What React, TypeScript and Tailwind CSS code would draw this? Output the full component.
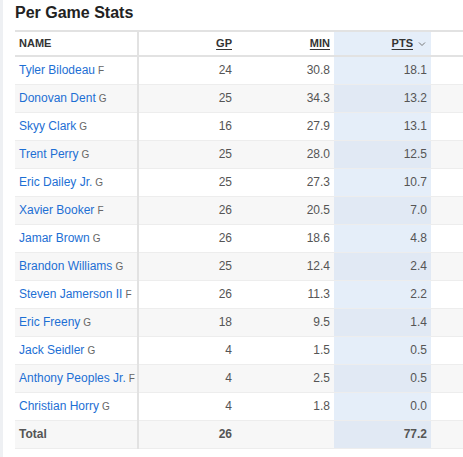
import React from "react";

type Player = { name: string; pos: string; gp: number; min: string; pts: string };

const players: Player[] = [
    { name: "Tyler Bilodeau", pos: "F", gp: 24, min: "30.8", pts: "18.1" },
    { name: "Donovan Dent", pos: "G", gp: 25, min: "34.3", pts: "13.2" },
    { name: "Skyy Clark", pos: "G", gp: 16, min: "27.9", pts: "13.1" },
    { name: "Trent Perry", pos: "G", gp: 25, min: "28.0", pts: "12.5" },
    { name: "Eric Dailey Jr.", pos: "G", gp: 25, min: "27.3", pts: "10.7" },
    { name: "Xavier Booker", pos: "F", gp: 26, min: "20.5", pts: "7.0" },
    { name: "Jamar Brown", pos: "G", gp: 26, min: "18.6", pts: "4.8" },
    { name: "Brandon Williams", pos: "G", gp: 25, min: "12.4", pts: "2.4" },
    { name: "Steven Jamerson II", pos: "F", gp: 26, min: "11.3", pts: "2.2" },
    { name: "Eric Freeny", pos: "G", gp: 18, min: "9.5", pts: "1.4" },
    { name: "Jack Seidler", pos: "G", gp: 4, min: "1.5", pts: "0.5" },
    { name: "Anthony Peoples Jr.", pos: "F", gp: 4, min: "2.5", pts: "0.5" },
    { name: "Christian Horry", pos: "G", gp: 4, min: "1.8", pts: "0.0" },
];

const App: React.FC = () => {
    return (
        <div className="flex min-h-[457px] w-[463px] overflow-hidden bg-white font-['Liberation_Sans',Arial,sans-serif]">
            {/* strip on the left */}
            <div className="w-[3px] shrink-0 bg-[#eef0f3]" />
            <div className="ml-[12px] flex-1">
                <h2 className="mt-[2px] h-[28px] text-[16px] font-bold leading-[22px] text-[#222]">Per Game Stats</h2>
                <table className="w-[460px] table-fixed border-collapse text-[12px]">
                    <colgroup>
                        <col className="w-[123px]" />
                        <col className="w-[98px]" />
                        <col className="w-[98px]" />
                        <col className="w-[97px]" />
                        <col />
                    </colgroup>
                    <thead>
                        <tr className="h-[25px] border-y-2 border-[#e2e2e2] text-[11px] font-bold text-[#333]">
                            <th className="border-r-2 border-[#e2e2e2] pl-[4px] text-left">NAME</th>
                            <th className="pr-[4px] text-right"><span className="underline underline-offset-2">GP</span></th>
                            <th className="pr-[4px] text-right"><span className="underline underline-offset-2">MIN</span></th>
                            <th className="bg-[#e5eef9] pr-[5px] text-right">
                                <span className="underline underline-offset-2">PTS</span>
                                <svg className="ml-[5px] inline-block align-middle" width="8" height="6" viewBox="0 0 8 6" fill="none" stroke="#777" strokeWidth="1">
                                    <path d="M1 1.5 L4 4.5 L7 1.5" />
                                </svg>
                            </th>
                            <th />
                        </tr>
                    </thead>
                    <tbody>
                        {players.map((p, i) => {
                            const even = i % 2 === 1;
                            return (
                                <tr key={p.name} className={`h-[28px] border-b border-[#ededed] ${even ? "bg-[#f7f7f7]" : "bg-white"}`}>
                                    <td className="border-r-2 border-[#e2e2e2] pl-[4px] whitespace-nowrap">
                                        <span className="text-[#1d6fd4]">{p.name}</span>
                                        <span className="ml-[3px] text-[10px] text-[#666]">{p.pos}</span>
                                    </td>
                                    <td className="pr-[4px] text-right text-[#555]">{p.gp}</td>
                                    <td className="pr-[4px] text-right text-[#555]">{p.min}</td>
                                    <td className={`pr-[4px] text-right text-[#555] ${even ? "bg-[#e1e9f4]" : "bg-[#e5eef9]"}`}>{p.pts}</td>
                                    <td />
                                </tr>
                            );
                        })}
                        <tr className="h-[28px] border-b border-[#ededed] bg-[#f7f7f7] font-bold text-[#555]">
                            <td className="border-r-2 border-[#e2e2e2] pl-[4px]">Total</td>
                            <td className="pr-[4px] text-right">26</td>
                            <td />
                            <td className="bg-[#e1e9f4] pr-[4px] text-right">77.2</td>
                            <td />
                        </tr>
                    </tbody>
                </table>
            </div>
        </div>
    );
};

export default App;
